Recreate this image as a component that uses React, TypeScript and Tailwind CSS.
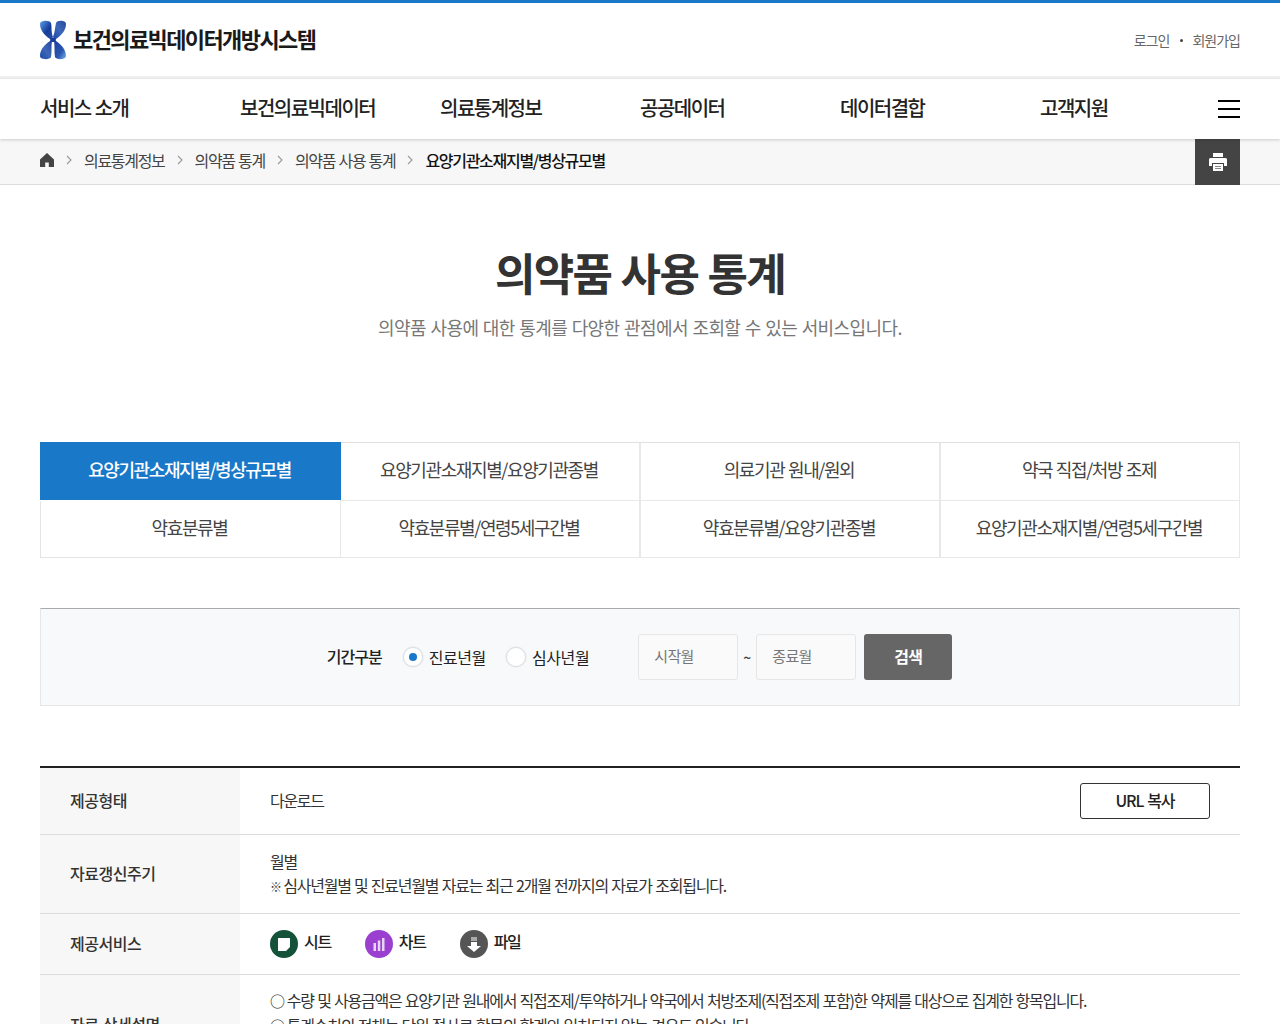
import type { ReactNode } from "react";

const font = "font-['Noto_Sans_CJK_KR','Noto_Sans',sans-serif]";

const nav = ["서비스 소개", "보건의료빅데이터", "의료통계정보", "공공데이터", "데이터결합", "고객지원"];

const tabs = [
  "요양기관소재지별/병상규모별",
  "요양기관소재지별/요양기관종별",
  "의료기관 원내/원외",
  "약국 직접/처방 조제",
  "약효분류별",
  "약효분류별/연령5세구간별",
  "약효분류별/요양기관종별",
  "요양기관소재지별/연령5세구간별",
];

function tabClass(i: number) {
  if (i === 0) {
    return "relative -mt-px -mr-px flex h-[58px] items-center justify-center bg-[#1a78c8] pr-[2px] pb-[4px] text-[18px] font-medium tracking-[-1.4px] text-white";
  }
  if (i === 4) {
    return "flex h-[57px] items-center justify-center border-b border-l border-[#e4e4e4] pr-[2px] pb-[4px] text-[18px] tracking-[-1.4px] text-[#444]";
  }
  return i < 4
    ? "flex h-[58px] items-center justify-center border-r border-b border-l border-[#e8e8e8] pr-[2px] pb-[4px] text-[18px] tracking-[-1.4px] text-[#444]"
    : "flex h-[57px] items-center justify-center border-r border-b border-l border-[#e8e8e8] pr-[2px] pb-[4px] text-[18px] tracking-[-1.4px] text-[#444]";
}

function Logo() {
  return (
    <svg width="28" height="40" viewBox="0 0 28 40" className="-ml-px shrink-0">
      <defs>
        <linearGradient id="lg1" x1="0" y1="0" x2="1" y2="1">
          <stop offset="0" stopColor="#5d9fe6" />
          <stop offset="0.55" stopColor="#153c9a" />
          <stop offset="1" stopColor="#2a4fa8" />
        </linearGradient>
        <linearGradient id="lg2" x1="1" y1="0" x2="0" y2="1">
          <stop offset="0" stopColor="#28469f" />
          <stop offset="0.5" stopColor="#3d67b8" />
          <stop offset="1" stopColor="#1a4aa8" />
        </linearGradient>
        <linearGradient id="lg3" x1="0" y1="0" x2="1" y2="1">
          <stop offset="0" stopColor="#1c409e" />
          <stop offset="0.6" stopColor="#2a55b0" />
          <stop offset="1" stopColor="#7db8ee" />
        </linearGradient>
      </defs>
      <path d="M1 4c0-4 10-4 11-1 1 4 0 9 2 14l-1 2-2 0C5 15 1 10 1 4z" fill="url(#lg1)" />
      <path d="M27 4c0-4-9-4-10-1-1 4-1 9-3 14l1 2 2 0c6-4 10-9 10-15z" fill="url(#lg2)" />
      <path d="M13 21h-2C5 25 1 30 1 36c0 4 10 4 11 1 1-5 0-10 1-16z" fill="url(#lg2)" />
      <path d="M15 21h2c6 4 10 9 10 15 0 4-10 4-11 1-1-5 0-10-1-16z" fill="url(#lg3)" />
      <rect x="11" y="18" width="6" height="4" rx="2" fill="#1c3d96" />
    </svg>
  );
}

function Crumb() {
  return (
    <svg width="6" height="10" viewBox="0 0 6 10" className="mx-[12px] shrink-0" fill="none" stroke="#999" strokeWidth="1.1">
      <path d="M1 1l4 4-4 4" />
    </svg>
  );
}

function Radio({ label, checked }: { label: string; checked?: boolean }) {
  return (
    <label className="flex items-center gap-[6px]">
      <span className="flex h-5 w-5 items-center justify-center rounded-full border border-[#dcdfe3] bg-white shadow-[0_0_2px_rgba(0,0,0,0.12)]">
        {checked && <span className="h-2 w-2 rounded-full bg-[#1a78c8]" />}
      </span>
      <span className="-mt-px text-[16px] tracking-[-0.4px] text-[#222]">{label}</span>
    </label>
  );
}

function Service({ color, label, children }: { color: string; label: string; children: ReactNode }) {
  return (
    <div className="flex items-center gap-[6px]">
      <span className={`flex h-7 w-7 items-center justify-center rounded-full ${color}`}>{children}</span>
      <span className="-mt-[7px] text-[16px] font-medium tracking-[-1.3px] text-[#222]">{label}</span>
    </div>
  );
}

const thClass = "flex w-[200px] items-center bg-[#f7f7f7] pb-[2px] pl-[30px] text-[16px] font-medium tracking-[-0.45px] text-[#333]";

export default function App() {
  return (
    <div className={`${font} h-screen overflow-hidden bg-white text-[#333] [word-spacing:1px]`}>
      <header className="h-[79px] border-t-[3px] border-b-[3px] border-t-[#1a78c8] border-b-[#f0f0f0]">
        <div className="flex h-[73px] items-center justify-between px-10">
          <div className="flex items-center gap-[6px]">
            <Logo />
            <span className="-mt-[2px] text-[22px] font-bold tracking-[-1.6px] text-[#1a1a1a]">보건의료빅데이터개방시스템</span>
          </div>
          <div className="mt-[2px] flex items-center gap-2 text-[14px] tracking-[-1px] text-[#666]">
            <span>로그인</span>
            <span className="mr-px ml-[3px] h-[3px] w-[3px] rounded-full bg-[#444]" />
            <span>회원가입</span>
          </div>
        </div>
      </header>

      <nav className="relative z-10 flex h-[60px] items-center pr-10 pl-10 shadow-[0_1px_3px_rgba(0,0,0,0.18)]">
        <div className="flex flex-1 items-center pb-[2px]">
          {nav.map((item) => (
            <span key={item} className="w-[200px] shrink-0 text-[20px] font-medium tracking-[-1.5px] text-[#222] last:w-auto">
              {item}
            </span>
          ))}
        </div>
        <div className="flex w-[22px] flex-col gap-[6px]">
          <span className="h-[2px] bg-black" />
          <span className="h-[2px] bg-black" />
          <span className="h-[2px] bg-black" />
        </div>
      </nav>

      <div className="flex h-[46px] items-center justify-between border-b border-[#ddd] bg-[#f7f7f7] pr-10 pl-10">
        <div className="flex items-center pb-[3px] text-[16px] tracking-[-1.3px] text-[#444]">
          <svg width="14" height="14" viewBox="0 0 14 14" className="mr-[12px] shrink-0" fill="#444">
            <path d="M7 0l7 6.500V14H8.800V9.500H5.200V14H0V6.500z" />
          </svg>
          <svg width="6" height="10" viewBox="0 0 6 10" className="mr-[12px] shrink-0" fill="none" stroke="#999" strokeWidth="1.1">
            <path d="M1 1l4 4-4 4" />
          </svg>
          <span>의료통계정보</span>
          <Crumb />
          <span>의약품 통계</span>
          <Crumb />
          <span>의약품 사용 통계</span>
          <Crumb />
          <span className="font-medium text-[#111]">요양기관소재지별/병상규모별</span>
        </div>
        <div className="flex h-[46px] w-[45px] items-center justify-center self-start bg-[#444]">
          <svg width="18" height="18" viewBox="0 0 18 18" fill="#fff">
            <rect x="4" y="0" width="10" height="4" />
            <path d="M1.500 5h15A1.500 1.500 0 0 1 18 6.500V13h-3V10H3v3H0V6.500A1.500 1.500 0 0 1 1.500 5z" />
            <path d="M4 11h10v7H4z" />
            <path d="M6 13h6v1H6zM6 15h6v1H6z" fill="#888" />
          </svg>
        </div>
      </div>

      <main className="px-10">
        <h1 className="mt-[52px] text-center text-[44px] leading-[70px] font-bold tracking-[-1.7px] text-[#333]">
          의약품 사용 통계
        </h1>
        <p className="mt-[7px] text-center text-[18px] tracking-[-0.58px] text-[#777]">
          의약품 사용에 대한 통계를 다양한 관점에서 조회할 수 있는 서비스입니다.
        </p>

        <div className="mt-[101px] grid grid-cols-4 border-t border-[#e0e0e0]">
          {tabs.map((tab, i) => (
            <div key={tab} className={tabClass(i)}>
              {tab}
            </div>
          ))}
        </div>

        <div className="mt-[50px] flex h-[98px] items-center justify-center border border-t-[#aaa] border-r-[#e4e6e8] border-b-[#e4e6e8] border-l-[#e4e6e8] bg-[#f8f9fa] pr-px">
          <span className="mr-[21px] -mt-[2px] text-[16px] font-medium tracking-[-1px] text-[#222]">기간구분</span>
          <div className="flex items-center gap-[20px]">
            <Radio label="진료년월" checked />
            <Radio label="심사년월" />
          </div>
          <div className="ml-[49px] flex h-[46px] w-[100px] items-center rounded-[3px] border border-[#e6e6e6] bg-[#fafafa] pb-px pl-[15px] text-[15px] tracking-[-0.6px] text-[#777]">
            시작월
          </div>
          <span className="mx-[5px] w-2 text-center text-[14px] font-medium text-[#444]">~</span>
          <div className="flex h-[46px] w-[100px] items-center rounded-[3px] border border-[#e6e6e6] bg-[#fafafa] pb-px pl-[15px] text-[15px] tracking-[-0.6px] text-[#777]">
            종료월
          </div>
          <div className="ml-[8px] flex h-[46px] w-[88px] items-center justify-center rounded-[3px] bg-[#666] pb-[2px] text-[16px] font-bold tracking-[-0.8px] text-white">
            검색
          </div>
        </div>

        <div className="mt-[60px] border-t-2 border-[#222]">
          <div className="flex h-[67px] border-b border-[#ddd]">
            <div className={thClass}>제공형태</div>
            <div className="flex flex-1 items-center justify-between px-[30px] text-[16px] tracking-[-1.3px] text-[#333]">
              <span className="pb-[2px]">다운로드</span>
              <div className="flex h-9 w-[130px] items-center justify-center rounded-[3px] border border-[#333] pb-[2px] font-medium tracking-[-1px] text-[#222]">URL 복사</div>
            </div>
          </div>
          <div className="flex h-[79px] border-b border-[#ddd]">
            <div className={thClass}>자료갱신주기</div>
            <div className="flex flex-1 flex-col justify-center px-[30px] text-[16px] leading-6 tracking-[-1.22px] text-[#333]">
              <p>월별</p>
              <p>
                <span className="-mr-px text-[12px] font-bold">※</span> 심사년월별 및 진료년월별 자료는 최근 2개월 전까지의 자료가 조회됩니다.
              </p>
            </div>
          </div>
          <div className="flex h-[61px] border-b border-[#ddd]">
            <div className={thClass}>제공서비스</div>
            <div className="flex flex-1 items-center gap-[34px] px-[30px]">
              <Service color="bg-[#14533a]" label="시트">
                <svg width="12" height="13" viewBox="0 0 12 13">
                  <path d="M0 0h12v9l-4 4H0z" fill="#fff" />
                </svg>
              </Service>
              <Service color="bg-[#9a3fd0]" label="차트">
                <svg width="12" height="13" viewBox="0 0 12 13" fill="#e8d5f5">
                  <rect x="0.500" y="5" width="2.500" height="8" />
                  <rect x="4.800" y="2.500" width="2.500" height="10.500" />
                  <rect x="9" y="0" width="2.500" height="13" />
                </svg>
              </Service>
              <Service color="bg-[#555]" label="파일">
                <svg width="14" height="15" viewBox="0 0 14 15">
                  <rect x="4" y="0" width="6" height="4" fill="#aaa" />
                  <path d="M4 5h6v4h4l-7 6-7-6h4z" fill="#fff" />
                </svg>
              </Service>
            </div>
          </div>
          <div className="flex">
            <div className={thClass}>자료 상세설명</div>
            <div className="flex-1 px-[30px] py-[13px] text-[16px] leading-6 tracking-[-1.22px] text-[#333]">
              <p>
                <span className="mr-[3px] text-[15px] font-medium">○</span>수량 및 사용금액은 요양기관 원내에서 직접조제/투약하거나 약국에서 처방조제(직접조제 포함)한 약제를 대상으로 집계한 항목입니다.
              </p>
              <p>
                <span className="mr-[3px] text-[15px] font-medium">○</span>통계수치의 전체는 단위 절사로 항목의 합계와 일치되지 않는 경우도 있습니다.
              </p>
              <p className="h-6" />
            </div>
          </div>
        </div>
      </main>
    </div>
  );
}
